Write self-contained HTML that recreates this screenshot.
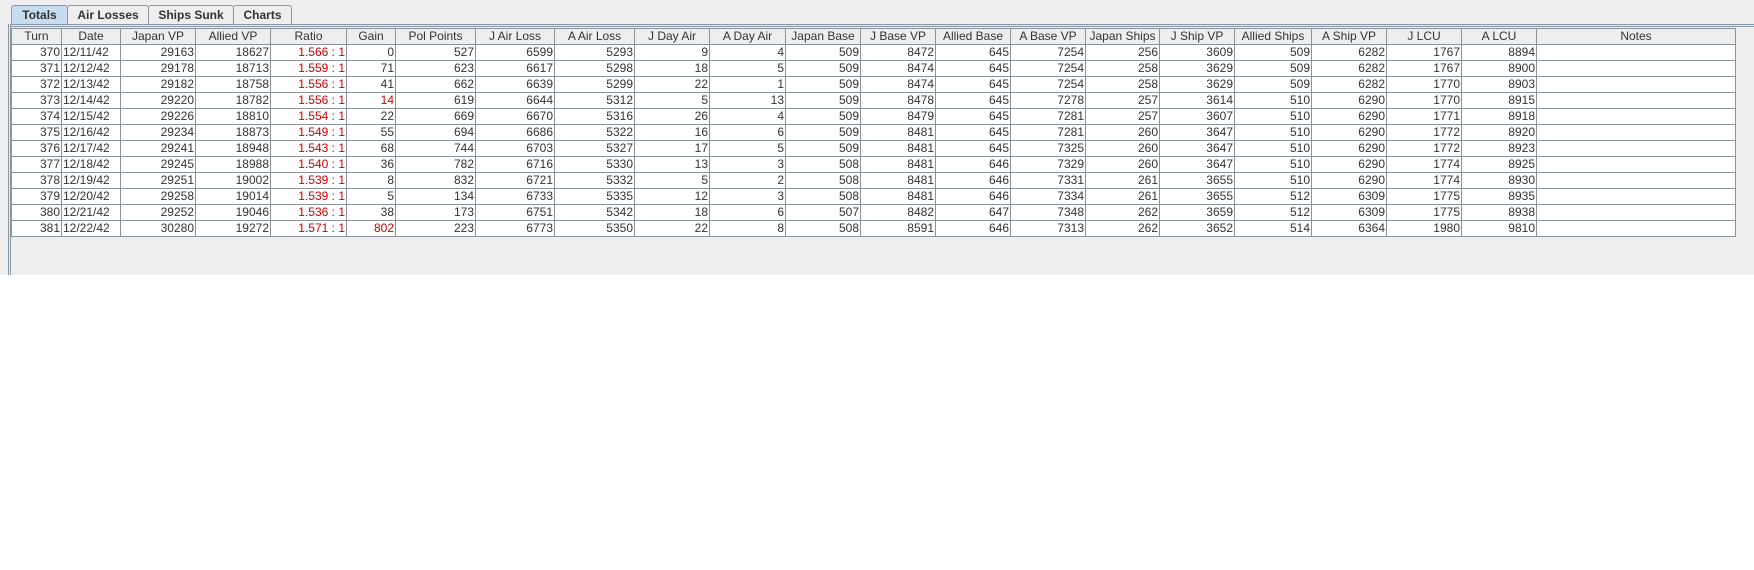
<!DOCTYPE html>
<html><head><meta charset="utf-8"><style>
html,body{margin:0;padding:0;background:#fff;width:1754px;height:570px;overflow:hidden;font-family:"Liberation Sans",sans-serif;}
#gray{position:absolute;left:0;top:0;width:1754px;height:275px;background:#eeeeee;}
.tab{position:absolute;top:5px;height:19px;border:1px solid #8a99a6;border-bottom:none;background:#eeeeee;font-weight:bold;font-size:12px;color:#333;text-align:center;line-height:18px;box-sizing:border-box;border-radius:3px 3px 0 0;}
#hl{position:absolute;left:8px;top:24px;width:1746px;height:3px;border-top:1px solid #8a99a6;border-bottom:1px solid #8a99a6;background:#dce8f5;box-sizing:border-box;}
#vl{position:absolute;left:8px;top:24px;width:3px;height:251px;border-left:1px solid #8a99a6;border-right:1px solid #8a99a6;background:#dce8f5;box-sizing:border-box;}
table{position:absolute;left:11px;top:28px;border-collapse:collapse;table-layout:fixed;font-size:12px;color:#333;}
td,th{border:1px solid #8a939c;height:15px;padding:0 1px;line-height:15px;white-space:nowrap;overflow:hidden;}
th{font-weight:normal;background:#eeeeee;text-align:center;height:15px;color:#333;}
td{text-align:right;background:#fff;}
td.l{text-align:left;}
.r{color:#cc0000;}
</style></head><body>
<div id="gray"></div>
<div class="tab" style="left:11px;width:57px;background:#c8dcf0;">Totals</div>
<div class="tab" style="left:67px;width:82px;">Air Losses</div>
<div class="tab" style="left:148px;width:86px;">Ships Sunk</div>
<div class="tab" style="left:233px;width:59px;">Charts</div>
<div id="hl"></div><div id="vl"></div>
<table>
<colgroup>
<col style="width:50px"><col style="width:59px"><col style="width:75px"><col style="width:75px"><col style="width:76px"><col style="width:49px"><col style="width:80px"><col style="width:79px"><col style="width:80px"><col style="width:75px"><col style="width:76px"><col style="width:75px"><col style="width:75px"><col style="width:75px"><col style="width:75px"><col style="width:74px"><col style="width:75px"><col style="width:77px"><col style="width:75px"><col style="width:75px"><col style="width:75px"><col style="width:199px">
</colgroup>
<tr><th>Turn</th><th>Date</th><th>Japan VP</th><th>Allied VP</th><th>Ratio</th><th>Gain</th><th>Pol Points</th><th>J Air Loss</th><th>A Air Loss</th><th>J Day Air</th><th>A Day Air</th><th>Japan Base</th><th>J Base VP</th><th>Allied Base</th><th>A Base VP</th><th>Japan Ships</th><th>J Ship VP</th><th>Allied Ships</th><th>A Ship VP</th><th>J LCU</th><th>A LCU</th><th>Notes</th></tr>
<tr><td>370</td><td class="l">12/11/42</td><td>29163</td><td>18627</td><td class="r">1.566 : 1</td><td>0</td><td>527</td><td>6599</td><td>5293</td><td>9</td><td>4</td><td>509</td><td>8472</td><td>645</td><td>7254</td><td>256</td><td>3609</td><td>509</td><td>6282</td><td>1767</td><td>8894</td><td></td></tr>
<tr><td>371</td><td class="l">12/12/42</td><td>29178</td><td>18713</td><td class="r">1.559 : 1</td><td>71</td><td>623</td><td>6617</td><td>5298</td><td>18</td><td>5</td><td>509</td><td>8474</td><td>645</td><td>7254</td><td>258</td><td>3629</td><td>509</td><td>6282</td><td>1767</td><td>8900</td><td></td></tr>
<tr><td>372</td><td class="l">12/13/42</td><td>29182</td><td>18758</td><td class="r">1.556 : 1</td><td>41</td><td>662</td><td>6639</td><td>5299</td><td>22</td><td>1</td><td>509</td><td>8474</td><td>645</td><td>7254</td><td>258</td><td>3629</td><td>509</td><td>6282</td><td>1770</td><td>8903</td><td></td></tr>
<tr><td>373</td><td class="l">12/14/42</td><td>29220</td><td>18782</td><td class="r">1.556 : 1</td><td class="r">14</td><td>619</td><td>6644</td><td>5312</td><td>5</td><td>13</td><td>509</td><td>8478</td><td>645</td><td>7278</td><td>257</td><td>3614</td><td>510</td><td>6290</td><td>1770</td><td>8915</td><td></td></tr>
<tr><td>374</td><td class="l">12/15/42</td><td>29226</td><td>18810</td><td class="r">1.554 : 1</td><td>22</td><td>669</td><td>6670</td><td>5316</td><td>26</td><td>4</td><td>509</td><td>8479</td><td>645</td><td>7281</td><td>257</td><td>3607</td><td>510</td><td>6290</td><td>1771</td><td>8918</td><td></td></tr>
<tr><td>375</td><td class="l">12/16/42</td><td>29234</td><td>18873</td><td class="r">1.549 : 1</td><td>55</td><td>694</td><td>6686</td><td>5322</td><td>16</td><td>6</td><td>509</td><td>8481</td><td>645</td><td>7281</td><td>260</td><td>3647</td><td>510</td><td>6290</td><td>1772</td><td>8920</td><td></td></tr>
<tr><td>376</td><td class="l">12/17/42</td><td>29241</td><td>18948</td><td class="r">1.543 : 1</td><td>68</td><td>744</td><td>6703</td><td>5327</td><td>17</td><td>5</td><td>509</td><td>8481</td><td>645</td><td>7325</td><td>260</td><td>3647</td><td>510</td><td>6290</td><td>1772</td><td>8923</td><td></td></tr>
<tr><td>377</td><td class="l">12/18/42</td><td>29245</td><td>18988</td><td class="r">1.540 : 1</td><td>36</td><td>782</td><td>6716</td><td>5330</td><td>13</td><td>3</td><td>508</td><td>8481</td><td>646</td><td>7329</td><td>260</td><td>3647</td><td>510</td><td>6290</td><td>1774</td><td>8925</td><td></td></tr>
<tr><td>378</td><td class="l">12/19/42</td><td>29251</td><td>19002</td><td class="r">1.539 : 1</td><td>8</td><td>832</td><td>6721</td><td>5332</td><td>5</td><td>2</td><td>508</td><td>8481</td><td>646</td><td>7331</td><td>261</td><td>3655</td><td>510</td><td>6290</td><td>1774</td><td>8930</td><td></td></tr>
<tr><td>379</td><td class="l">12/20/42</td><td>29258</td><td>19014</td><td class="r">1.539 : 1</td><td>5</td><td>134</td><td>6733</td><td>5335</td><td>12</td><td>3</td><td>508</td><td>8481</td><td>646</td><td>7334</td><td>261</td><td>3655</td><td>512</td><td>6309</td><td>1775</td><td>8935</td><td></td></tr>
<tr><td>380</td><td class="l">12/21/42</td><td>29252</td><td>19046</td><td class="r">1.536 : 1</td><td>38</td><td>173</td><td>6751</td><td>5342</td><td>18</td><td>6</td><td>507</td><td>8482</td><td>647</td><td>7348</td><td>262</td><td>3659</td><td>512</td><td>6309</td><td>1775</td><td>8938</td><td></td></tr>
<tr><td>381</td><td class="l">12/22/42</td><td>30280</td><td>19272</td><td class="r">1.571 : 1</td><td class="r">802</td><td>223</td><td>6773</td><td>5350</td><td>22</td><td>8</td><td>508</td><td>8591</td><td>646</td><td>7313</td><td>262</td><td>3652</td><td>514</td><td>6364</td><td>1980</td><td>9810</td><td></td></tr>
</table>
</body></html>
